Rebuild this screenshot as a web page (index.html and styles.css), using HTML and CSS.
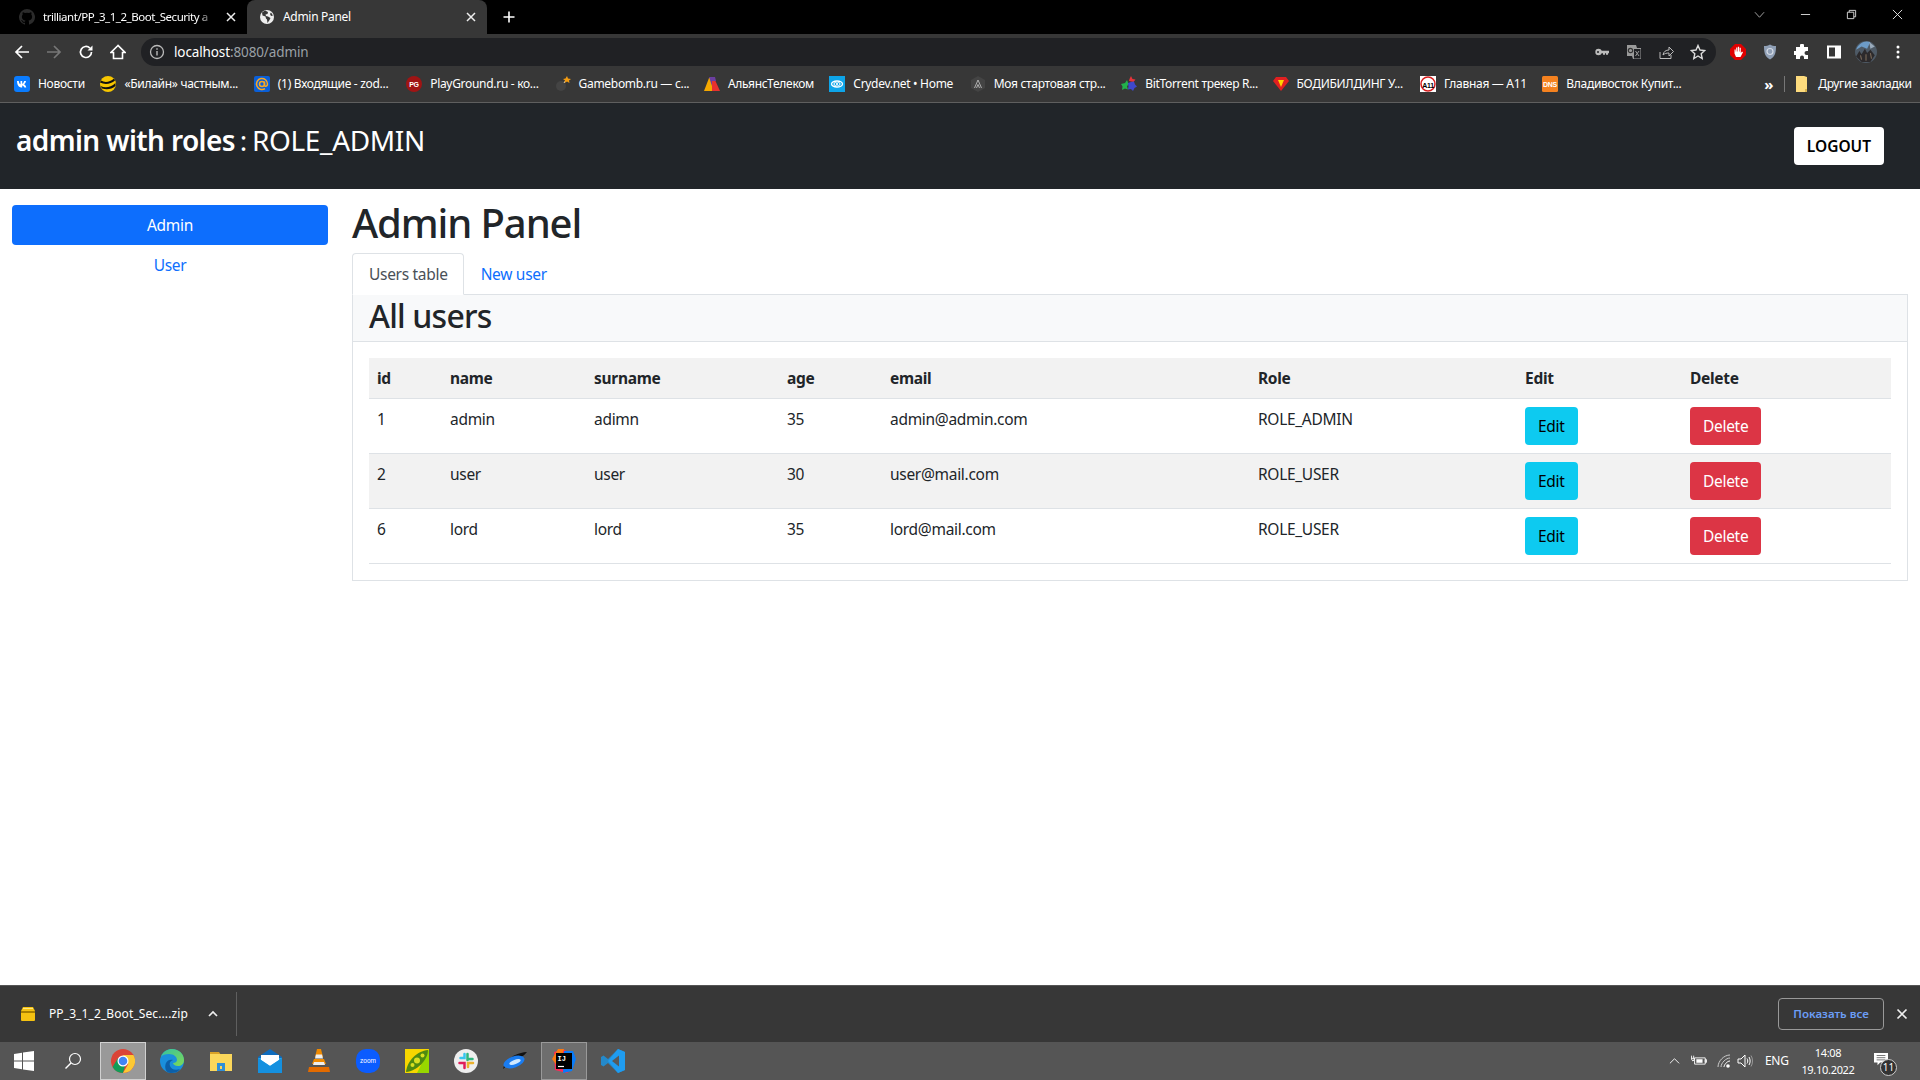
FILE: index.html
```html
<!DOCTYPE html>
<html lang="en">
<head>
  <meta charset="utf-8">
  <title>Admin Panel</title>
  <link rel="stylesheet" href="styles.css">
</head>
<body>

<div class="tabstrip">
  <div class="tab">
    <svg class="fav" viewBox="0 0 16 16"><path fill="#2b2b2b" d="M8 0a8 8 0 0 0-2.5 15.6c.4.1.5-.2.5-.4v-1.4c-2.2.5-2.7-1-2.7-1-.4-.9-.9-1.200-.9-1.200-.7-.5.100-.5.100-.5.800.100 1.200.8 1.200.8.700 1.200 1.900.900 2.300.700.100-.5.300-.900.500-1.100-1.800-.2-3.600-.900-3.600-4 0-.9.300-1.600.800-2.100-.1-.2-.4-1 .100-2.100 0 0 .7-.2 2.200.8a7.600 7.600 0 0 1 4 0c1.500-1 2.200-.8 2.200-.8.500 1.100.2 1.900.1 2.100.5.500.8 1.200.8 2.100 0 3.100-1.900 3.800-3.700 4 .3.300.6.800.6 1.500v2.200c0 .2.100.5.500.4A8 8 0 0 0 8 0z"/></svg>
    <span class="tab-title tab-fade">trilliant/PP_3_1_2_Boot_Security a</span>
    <svg class="tab-x" viewBox="0 0 10 10"><path d="m1 1 8 8M9 1 1 9" stroke="#eee" stroke-width="1.500"/></svg>
  </div>
  <div class="tab tab-active">
    <svg class="fav" viewBox="0 0 16 16"><circle cx="8" cy="8" r="7" fill="#eee"/><path fill="#373737" d="M6 1.500 3 3.500l.5 3 3 1 .5 2 1 1 .5 3.500 2-3 1-2-2.500-1.500-2-.5-.5-1.500 2-.5.500-2zM12 3.500l2 3-2 .5-1-2z"/></svg>
    <span class="tab-title">Admin Panel</span>
    <svg class="tab-x" viewBox="0 0 10 10"><path d="m1 1 8 8M9 1 1 9" stroke="#eee" stroke-width="1.500"/></svg>
  </div>
  <svg class="newtab" viewBox="0 0 12 12"><path d="M6 .5v11M.5 6h11" stroke="#fff" stroke-width="1.600"/></svg>
  <div class="winctl">
    <svg viewBox="0 0 12 12"><path d="M1 3.500 6 9l5-5.500" fill="none" stroke="#aaa"/></svg>
    <svg viewBox="0 0 12 12"><path d="M1 6h10" stroke="#ddd"/></svg>
    <svg viewBox="0 0 12 12"><path d="M1.500 3.500h7v7h-7zM3.500 3.500v-2h7v7h-2" fill="none" stroke="#ddd"/></svg>
    <svg viewBox="0 0 12 12"><path d="m1 1 10 10M11 1 1 11" stroke="#eee"/></svg>
  </div>
</div>

<div class="toolbar">
  <span class="tb-btn"><svg viewBox="0 0 16 16"><path d="M15 8H2M8 2 2 8l6 6" fill="none" stroke="#fff" stroke-width="1.700"/></svg></span>
  <span class="tb-btn"><svg viewBox="0 0 16 16"><path d="M1 8h13M8 2l6 6-6 6" fill="none" stroke="#777" stroke-width="1.700"/></svg></span>
  <span class="tb-btn"><svg viewBox="0 0 16 16"><path d="M13.500 8a5.500 5.500 0 1 1-1.600-3.900" fill="none" stroke="#fff" stroke-width="1.700"/><path d="M14.500 1.500v5h-5z" fill="#fff"/></svg></span>
  <span class="tb-btn"><svg viewBox="0 0 16 16"><path d="M8 1.500 1 8.500h2.500v6h9v-6H15z" fill="none" stroke="#fff" stroke-width="1.600"/></svg></span>
  <div class="omnibox">
    <svg class="info" viewBox="0 0 16 16"><circle cx="8" cy="8" r="6.500" fill="none" stroke="#bbb" stroke-width="1.300"/><path d="M8 7v4.500M8 4.300v1.400" stroke="#bbb" stroke-width="1.400"/></svg>
    <span class="url">localhost<span class="url-dim">:8080/admin</span></span>
    <span class="omni-icons">
      <span class="tb-btn"><svg viewBox="0 0 16 16"><circle cx="4.500" cy="8" r="3.200" fill="#bbb"/><circle cx="4" cy="8" r="1" fill="#202124"/><path d="M7 6.700h8v2.600h-1v1.500h-2V9.300h-1v1.500H9V9.300H7z" fill="#bbb"/></svg></span>
      <span class="tb-btn"><svg viewBox="0 0 16 16"><path d="M1 1h9l1 3h4v11H7l-1-3H1z" fill="#9a9a9a"/><path d="M8 5h6.500v9.500H8z" fill="#202124"/><circle cx="4.500" cy="6.500" r="2.200" fill="none" stroke="#333" stroke-width="1.200"/><path d="m9.500 7 3.500 5M13 7l-3.500 5" stroke="#9a9a9a"/></svg></span>
      <span class="tb-btn"><svg viewBox="0 0 16 16"><path d="M2 8v6.500h11V11" fill="none" stroke="#bbb"/><path d="M5 11c.500-3.500 3-5 6-5V3l4.500 4.500L11 12V9c-2.500 0-4.500.500-6 2z" fill="none" stroke="#bbb"/></svg></span>
      <span class="tb-btn"><svg viewBox="0 0 16 16"><path d="m8 1.500 2 4.500 4.800.5-3.600 3.200 1 4.800L8 12l-4.200 2.500 1-4.800L1.200 6.500 6 6z" fill="none" stroke="#ddd" stroke-width="1.400"/></svg></span>
    </span>
  </div>
  <div class="ext-icons">
    <span class="tb-btn"><svg viewBox="0 0 16 16"><path d="M5 0h6l5 5v6l-5 5H5l-5-5V5z" fill="#e00000"/><path d="M4.500 9.500V5.500h1.200v2h.5V3.500h1.200v4h.5V2.800h1.200v4.700h.5V3.800h1.200v5.200l1.200-1.400 1 .6-2.500 4.800H6z" fill="#fff"/></svg></span>
    <span class="tb-btn"><svg viewBox="0 0 16 16"><path d="M8 .5c2 1.200 3.500 1.500 6 1.500 0 6-.5 10.500-6 13.500C2.500 12.500 2 8 2 2c2.500 0 4-.3 6-1.500z" fill="#8f9fb5"/><circle cx="8" cy="7.500" r="3" fill="none" stroke="#d5dbe5" stroke-width="1.200"/></svg></span>
    <span class="tb-btn"><svg viewBox="0 0 16 16"><path d="M6 1.500a2 2 0 0 1 4 0V3h4v4h-1.500a2 2 0 0 0 0 4H14v4h-4v-1.500a2 2 0 0 0-4 0V15H2v-4H.5a2 2 0 0 1 0-4H2V3h4z" fill="#fff"/></svg></span>
    <span class="tb-btn"><svg viewBox="0 0 16 16"><path fill-rule="evenodd" d="M1 1.500h14v13H1zM3 3.500v9h6v-9z" fill="#fff"/></svg></span>
    <span class="tb-btn"><svg class="avatar" viewBox="0 0 20 20"><circle cx="10" cy="10" r="10" fill="#4e5a66"/><path d="M1 8C3 2 9-1 14 1l-3 6-5-2z" fill="#6d9cc8"/><path d="M1 14l3-5 2 3 3-5 2 4 3-3 4 5-4 6H6z" fill="#2c2a2c"/><path d="M13 1l5 4-4 2z" fill="#9ab"/><path d="M5 13l1 4M10 12v6M14 11l1 5" stroke="#7a6a5a"/></svg></span>
    <span class="tb-btn"><svg viewBox="0 0 16 16"><circle cx="8" cy="3" r="1.500" fill="#fff"/><circle cx="8" cy="8" r="1.500" fill="#fff"/><circle cx="8" cy="13" r="1.500" fill="#fff"/></svg></span>
  </div>
</div>

<div class="bookmarks">
  <div class="bm-list">
    <span class="bm"><svg viewBox="0 0 16 16"><rect width="16" height="16" rx="3" fill="#0a7cff"/><path d="M3 5h1.800c.1 2 .9 3 1.700 3.200V5h1.700v2.700c.8-.1 1.500-1 1.900-2.700H12c-.3 1.700-1.200 2.800-1.900 3.300.7.400 1.800 1.300 2.200 3.200h-1.900c-.4-1.200-1.200-2-2.200-2.100v2.100H8c-3 0-4.800-2-5-6.500z" fill="#fff"/></svg>Новости</span>
    <span class="bm"><svg viewBox="0 0 16 16"><circle cx="8" cy="8" r="8" fill="#f7c600"/><path d="M1 4.500c4 2.500 9 1.500 13-2l1 2c-4 3.500-10 4.500-15 2zM.5 10c5 2.500 10 1.500 15-3v3c-4 3.500-9 4-13.500 2.500z" fill="#111"/></svg>«Билайн» частным...</span>
    <span class="bm"><svg viewBox="0 0 16 16"><rect width="16" height="16" rx="2" fill="#0a5fd8"/><circle cx="8" cy="8" r="2.500" fill="none" stroke="#f9a825" stroke-width="1.500"/><path d="M10.500 5.500V9c0 2 3 1.500 3-1a5.500 5.500 0 1 0-2.500 4.600" fill="none" stroke="#f9a825" stroke-width="1.500"/></svg>(1) Входящие - zod...</span>
    <span class="bm"><svg viewBox="0 0 16 16"><circle cx="8" cy="8" r="8" fill="#a01414"/><text class="bm-pg" x="8" y="11">PG</text></svg>PlayGround.ru - ко...</span>
    <span class="bm"><svg viewBox="0 0 16 16"><circle cx="6" cy="10" r="5" fill="#444"/><path d="m9 7 2-3" stroke="#ddd"/><path d="m12 0 1 2.500L16 3l-2 1.500.5 2.500-2.500-1.500L9.500 7l.5-2.500L8 3l2.500-.5z" fill="#f39c12"/></svg>Gamebomb.ru — с...</span>
    <span class="bm"><svg viewBox="0 0 16 16"><path d="M0 15 5 2h3v13z" fill="#f5a800"/><path d="M8 15V4l3 0 5 11z" fill="#e8312f"/><path d="M5 1h6l1 4H8v5z" fill="#6b3fa0"/></svg>АльянсТелеком</span>
    <span class="bm"><svg viewBox="0 0 16 16"><rect width="16" height="16" fill="#0ea5e9"/><ellipse cx="8" cy="8" rx="5.500" ry="3" fill="none" stroke="#fff" stroke-width="1.300"/><circle cx="6.500" cy="8" r="1.500" fill="none" stroke="#fff"/><circle cx="9.500" cy="8" r="1.500" fill="none" stroke="#fff"/></svg>Crydev.net • Home</span>
    <span class="bm"><svg viewBox="0 0 16 16"><path d="M8 0l7 4v8l-7 4-7-4V4z" fill="#444"/><path d="M4.500 12 8 4l3.500 8M6.500 12 8 8.500 9.500 12" fill="none" stroke="#ccc" stroke-width=".8"/></svg>Моя стартовая стр...</span>
    <span class="bm"><svg viewBox="0 0 16 16"><path d="m10 0 1.500 3 3 .5-2 2.500L8 5l.5-2z" fill="#e6343a"/><path d="M0 8l4-1 2-3 1.500 4L6 10.500l1 3-3-1L1 14l.5-3.500z" fill="#22b14c"/><path d="M7 7l3-1 3-.5 1 3 2 2-2.500 1.500L12 15l-2-2-3 .5.500-3z" fill="#3f48cc"/></svg>BitTorrent трекер R...</span>
    <span class="bm"><svg viewBox="0 0 16 16"><path d="M3 1h10l3 4-8 10L0 5z" fill="#e02020"/><path d="M5 4h6L8 11z" fill="#ffd400"/></svg>БОДИБИЛДИНГ У...</span>
    <span class="bm"><svg viewBox="0 0 16 16"><rect width="16" height="16" fill="#fff"/><circle cx="8" cy="8" r="7" fill="none" stroke="#d81e1e" stroke-width="1.500"/><text class="bm-a11" x="8" y="11.500">A11</text></svg>Главная — А11</span>
    <span class="bm"><svg viewBox="0 0 16 16"><rect width="16" height="16" rx="1.500" fill="#f58220"/><text class="bm-dns" x="8" y="10.500">DNS</text></svg>Владивосток Купит...</span>
  </div>
  <span class="bm-more">»</span>
  <span class="bm-sep"></span>
  <span class="bm bm-other"><svg viewBox="0 0 16 16"><path d="M2 0h8l3 1v15H2z" fill="#fddb7d"/><path d="M11 13h2v3h-2z" fill="#d9b44f"/></svg>Другие закладки</span>
</div>

<header class="navbar">
  <h2 class="nav-title"><b>admin with roles</b> : ROLE_ADMIN</h2>
  <a class="btn btn-logout" href="#">LOGOUT</a>
</header>

<div class="page">
  <aside class="sidebar">
    <a class="side-link side-active" href="#">Admin</a>
    <a class="side-link" href="#">User</a>
  </aside>
  <main class="content">
    <h1>Admin Panel</h1>
    <div class="tabs">
      <a class="nav-tab nav-tab-active" href="#">Users table</a>
      <a class="nav-tab" href="#">New user</a>
    </div>
    <section class="card">
      <h2 class="card-header">All users</h2>
      <div class="card-body">
        <table class="users">
          <thead>
            <tr><th>id</th><th>name</th><th>surname</th><th>age</th><th>email</th><th>Role</th><th>Edit</th><th>Delete</th></tr>
          </thead>
          <tbody>
            <tr><td>1</td><td>admin</td><td>adimn</td><td>35</td><td>admin@admin.com</td><td>ROLE_ADMIN</td><td><a class="btn btn-info" href="#">Edit</a></td><td><a class="btn btn-danger" href="#">Delete</a></td></tr>
            <tr><td>2</td><td>user</td><td>user</td><td>30</td><td>user@mail.com</td><td>ROLE_USER</td><td><a class="btn btn-info" href="#">Edit</a></td><td><a class="btn btn-danger" href="#">Delete</a></td></tr>
            <tr><td>6</td><td>lord</td><td>lord</td><td>35</td><td>lord@mail.com</td><td>ROLE_USER</td><td><a class="btn btn-info" href="#">Edit</a></td><td><a class="btn btn-danger" href="#">Delete</a></td></tr>
          </tbody>
        </table>
      </div>
    </section>
  </main>
</div>

<div class="downloads">
  <svg class="dl-icon" viewBox="0 0 16 16"><path d="M3 1h10l2 4v9a1 1 0 0 1-1 1H2a1 1 0 0 1-1-1V5z" fill="#f5c211"/><path d="M1 5h14v2H1z" fill="#a87f00"/><path d="M3 2.500h10" stroke="#ffe680"/></svg>
  <span class="dl-name">PP_3_1_2_Boot_Sec....zip</span>
  <svg class="dl-caret" viewBox="0 0 12 12"><path d="m2 8 4-4 4 4" fill="none" stroke="#eee" stroke-width="1.700"/></svg>
  <span class="dl-sep"></span>
  <a class="dl-all" href="#">Показать все</a>
  <svg class="dl-close" viewBox="0 0 12 12"><path d="m1.500 1.500 9 9M10.500 1.500l-9 9" stroke="#eee" stroke-width="1.700"/></svg>
</div>

<footer class="taskbar">
  <span class="task task-start"><svg viewBox="0 0 20 20"><path d="M0 3l8-1.200V9.500H0zM9 1.600 20 0v9.500H9zM0 10.500h8v7.800L0 17zM9 10.500h11V20L9 18.400z" fill="#fff"/></svg></span>
  <span class="task task-search"><svg viewBox="0 0 18 18"><circle cx="11" cy="7" r="5.500" fill="none" stroke="#fff" stroke-width="1.200"/><path d="M7 11 1.500 16.500" stroke="#fff" stroke-width="1.400"/></svg></span>
  <span class="task task-open"><svg viewBox="0 0 24 24"><circle cx="12" cy="12" r="12" fill="#db4437"/><path d="M12 24a12 12 0 0 1-10.400-6L7 9l5 8 2 0z" fill="#0f9d58"/><path d="M12 6h10.400A12 12 0 0 1 12 24l5.200-9z" fill="#fcc934"/><circle cx="12" cy="12" r="5.500" fill="#fff"/><circle cx="12" cy="12" r="4.300" fill="#4285f4"/></svg></span>
  <span class="task"><svg viewBox="0 0 24 24"><defs><linearGradient id="edge" x1="0" y1="0" x2="1" y2="1"><stop offset="0" stop-color="#35c1a0"/><stop offset="1" stop-color="#7ed957"/></linearGradient></defs><circle cx="12" cy="12" r="12" fill="#1a8fdc"/><path d="M1 8C3 2 8 0 12 0c7 0 12 5 12 11 0 4-3 6-6 6-3 0-5-2-5-3 2 0 4-1 4-3 0-3-3-6-8-6C5 5 2 6 1 8z" fill="url(#edge)"/><path d="M11 24C6 24 4 19 6 14c1-3 5-4 7-3-3 1-4 3-3 6 1 3 5 5 10 3-2 3-5 4-9 4z" fill="#0c5fa8"/></svg></span>
  <span class="task"><svg viewBox="0 0 24 24"><path d="M1 3h9l2 3H1z" fill="#d9a227"/><path d="M1 5h22v17H1z" fill="#fbd75b"/><path d="M8 14h8v8H8z" fill="#2f8fd8"/><path d="M11 17h2v3h-2z" fill="#fbd75b"/></svg></span>
  <span class="task"><svg viewBox="0 0 24 24"><path d="M0 8 12 0l12 8v16H0z" fill="#0f6cbd"/><path d="M0 9h24v15H0z" fill="#28a8ea"/><path d="M3 6h18v5l-9 6-9-6z" fill="#fff"/><path d="m0 9 12 8 12-8v15H0z" fill="#1490df"/></svg></span>
  <span class="task"><svg viewBox="0 0 24 24"><path d="M10 0h4l2 8H8z" fill="#f08a00"/><path d="M9 5.500h6l1 4H8z" fill="#eee"/><path d="M7 10h10l2 5H5z" fill="#f08a00"/><path d="M7 13h10l1 3H6z" fill="#eee"/><path d="M2 18h20l1 5H1z" fill="#e36b00"/></svg></span>
  <span class="task"><svg viewBox="0 0 24 24"><rect width="24" height="24" rx="10" fill="#0b5cff"/><text class="zoom-word" x="12" y="14">zoom</text></svg></span>
  <span class="task"><svg viewBox="0 0 24 24"><rect width="24" height="24" fill="#f7d600"/><path d="M24 0v24H12z" fill="#97d700"/><path d="M1 23C2 12 12 2 23 1c0 10-11 21-22 22z" fill="#4f8a10"/><circle cx="7.500" cy="16" r="2" fill="#d9e021"/><circle cx="12" cy="11.500" r="3" fill="#d9e021"/><circle cx="17.500" cy="6.500" r="2" fill="#d9e021"/></svg></span>
  <span class="task"><svg viewBox="0 0 24 24"><circle cx="12" cy="12" r="12" fill="#eee"/><path d="M10.500 5v4h-4" stroke="#36c5f0" stroke-width="2.500" fill="none" stroke-linecap="round"/><path d="M13.500 5v6M15.500 10h3" stroke="#2eb67d" stroke-width="2.500" stroke-linecap="round"/><path d="M19 14h-5v4" stroke="#ecb22e" stroke-width="2.500" fill="none" stroke-linecap="round"/><path d="M5.500 14h5v5" stroke="#e01e5a" stroke-width="2.500" fill="none" stroke-linecap="round"/></svg></span>
  <span class="task"><svg viewBox="0 0 24 24"><path d="M0 20C2 12 10 4 24 3c-3 4-6 5-10 7-5 2-8 5-14 10z" fill="#111"/><ellipse cx="11" cy="13" rx="11" ry="5.500" transform="rotate(-20 11 13)" fill="#1a7cf0"/><ellipse cx="12" cy="13" rx="6" ry="2.200" transform="rotate(-20 12 13)" fill="#cfe8ff"/></svg></span>
  <span class="task task-running"><svg viewBox="0 0 24 24"><path d="M2 3 11 0l5 3 7 4-3 13-5 4-12-3z" fill="#fe2857"/><path d="M12 2h9l3 8-4 12-9 2z" fill="#087cfa"/><path d="M0 10 6 0h6L6 18z" fill="#f97a12"/><rect x="4" y="4" width="16" height="16" fill="#000"/><text class="ij-word" x="5.500" y="11.500">IJ</text><path d="M6 17.500h6" stroke="#fff" stroke-width="1.200"/></svg></span>
  <span class="task"><svg viewBox="0 0 24 24"><path d="M17 0 7 10 2.500 6.500 0 8v8l2.500 1.500L7 14l10 10 7-3V3z" fill="#2489ca"/><path d="M17 0 7 12l10 12 7-3V3z" fill="#1f9cf0"/><path d="M18 6.500 11 12l7 5.500z" fill="#595959"/></svg></span>

  <div class="tray">
    <svg class="tray-caret" viewBox="0 0 12 12"><path d="m1 8 5-5 5 5" fill="none" stroke="#fff"/></svg>
    <svg class="tray-icon tray-battery" viewBox="0 0 18 14"><path d="M4 3.500h12v7H4z" fill="none" stroke="#fff"/><path d="M6 5h7v4H6z" fill="#fff"/><path d="M16 5.500h1.500v3H16zM.5 1v3M3 1v3M0 4h3.500v2L2 7z" fill="none" stroke="#fff"/></svg>
    <svg class="tray-icon" viewBox="0 0 16 16"><path d="M2 14C2 8 8 2 14 2M5 14c0-4 5-9 9-9" fill="none" stroke="#ccc"/><path d="M8 14c0-2 3-6 6-6" fill="none" stroke="#fff"/><circle cx="12" cy="13" r="1.800" fill="#fff"/></svg>
    <svg class="tray-icon tray-sound" viewBox="0 0 16 16"><path d="M1 6h3l4-4v12l-4-4H1z" fill="none" stroke="#fff"/><path d="M10 5.500c1 1.500 1 3.500 0 5M12 4c1.500 2.500 1.500 5.500 0 8" fill="none" stroke="#fff"/><path d="M14 2.500c2 3 2 8 0 11" fill="none" stroke="#999"/></svg>
    <span class="tray-lang">ENG</span>
    <span class="tray-clock"><span>14:08</span><span>19.10.2022</span></span>
    <span class="tray-notify">
      <svg viewBox="0 0 16 16"><path d="M0 1h16v11H7l-3 3v-3H0z" fill="#fff"/><path d="M3 4h10M3 6.500h10M3 9h10" stroke="#666"/></svg>
      <span class="notify-count">11</span>
    </span>
  </div>
</footer>

</body>
</html>
```

FILE: styles.css
```css
* {
    box-sizing: border-box;
}

html, body {
    margin: 0;
    padding: 0;
}

body {
    width: 1920px;
    height: 1080px;
    overflow: hidden;
    display: flex;
    flex-direction: column;
    font: 15.500px/24px "Noto Sans", "Open Sans", sans-serif;
    letter-spacing: -.3px;
    color: #212529;
    background: #fff;
}

a {
    text-decoration: none;
}

svg {
    display: block;
    flex: none;
}

/* browser chrome */

.tabstrip {
    height: 34px;
    flex: none;
    display: flex;
    align-items: stretch;
    background: #000;
    color: #fff;
    font-size: 12px;
    padding-left: 7px;
}

.tab {
    width: 240px;
    display: flex;
    align-items: center;
    padding: 0 8px 0 12px;
    gap: 8px;
}

.tab-active {
    background: #373737;
    border-radius: 8px 8px 0 0;
}

.tab-title {
    flex: 1;
    white-space: nowrap;
}

.tab-fade {
    font-size: 11.500px;
    letter-spacing: -.45px;
    -webkit-mask-image: linear-gradient(to right, #000 90%, transparent);
    mask-image: linear-gradient(to right, #000 90%, transparent);
}

.fav {
    width: 16px;
    height: 16px;
}

.tab-x {
    width: 10px;
    height: 10px;
    margin: 0 3px;
}

.newtab {
    width: 12px;
    height: 12px;
    margin: 11px 0 0 16px;
}

.winctl {
    margin-left: auto;
    display: flex;
    align-items: center;
    gap: 35px;
    padding: 0 17px 6px 0;
}

.winctl svg {
    width: 11px;
    height: 11px;
}

.toolbar {
    height: 32px;
    flex: none;
    display: flex;
    padding: 0 6px;
    background: #373737;
    align-items: flex-end;
}

.tb-btn {
    width: 32px;
    height: 28px;
    flex: none;
    display: flex;
    align-items: center;
    justify-content: center;
}

.tb-btn svg {
    width: 16px;
    height: 16px;
}

.tb-btn .avatar {
    width: 22px;
    height: 22px;
}

.omnibox {
    flex: 1;
    height: 28px;
    margin: 0 6px 0 7px;
    display: flex;
    align-items: center;
    padding-left: 8px;
    background: #202124;
    border-radius: 14px;
    color: #fff;
    font-size: 13.500px;
    letter-spacing: -.12px;
}

.info {
    width: 16px;
    height: 16px;
    margin-right: 9px;
}

.url-dim {
    color: #9aa0a6;
}

.omni-icons, .ext-icons {
    display: flex;
}

.omni-icons {
    margin-left: auto;
    padding-right: 2px;
}

.bookmarks {
    height: 37px;
    flex: none;
    display: flex;
    align-items: center;
    padding: 0 0 1px 14px;
    background: #373737;
    border-bottom: 1px solid #5f5f5f;
    color: #fff;
    font-size: 12px;
}

.bm-list {
    display: grid;
    grid-template-columns: 70px 137px 136px 132px 133px 109px 124px 135px 135px 131px 106px 137px;
    column-gap: 16.400px;
}

.bm {
    display: flex;
    align-items: center;
    gap: 8px;
    white-space: nowrap;
}

.bm svg {
    width: 16px;
    height: 16px;
}

.bm-pg, .bm-a11, .bm-dns {
    font: bold 7px "Liberation Sans", sans-serif;
    text-anchor: middle;
}

.bm-pg, .bm-dns {
    fill: #fff;
}

.bm-a11 {
    fill: #000;
}

.bm-more {
    margin-left: 85px;
    font-size: 15px;
    font-weight: bold;
}

.bm-sep {
    width: 1px;
    height: 16px;
    margin: 0 9px 0 11px;
    background: #777;
}

/* page */

.navbar {
    height: 86px;
    flex: none;
    display: flex;
    justify-content: space-between;
    align-items: flex-start;
    padding: 21px 36px 0 16px;
    background: #212529;
}

.nav-title {
    margin: 0;
    color: #fff;
    font-size: 28px;
    font-weight: 400;
    line-height: 1.200;
    letter-spacing: -.35px;
    word-spacing: -2px;
}

.nav-title b {
    font-weight: 600;
    letter-spacing: -.6px;
    word-spacing: 0;
}

.btn {
    display: inline-block;
    padding: 7px 13px;
    border-radius: 4px;
    white-space: nowrap;
}

.btn-logout {
    margin-top: 3px;
    color: #000;
    background: #fff;
    font-size: 15.500px;
    font-weight: 600;
    letter-spacing: 0;
}

.btn-info {
    color: #000;
    background: #0dcaf0;
}

.btn-danger {
    color: #fff;
    background: #dc3545;
}

.page {
    flex: 1;
    display: flex;
    min-height: 0;
    padding: 0 12px;
}

.sidebar {
    width: 316px;
    flex: none;
    padding-top: 16px;
}

.side-link {
    display: block;
    padding: 8px 16px;
    text-align: center;
    color: #0d6efd;
    border-radius: 4px;
}

.side-active {
    color: #fff;
    background: #0d6efd;
}

.content {
    flex: 1;
    margin-left: 24px;
    padding-top: 10px;
}

h1 {
    margin: 0 0 6px;
    font-size: 40px;
    font-weight: 500;
    line-height: 1.200;
    letter-spacing: -1.100px;
}

.tabs {
    display: flex;
    margin-bottom: -1px;
}

.nav-tab {
    padding: 8px 16px;
    border: 1px solid transparent;
    border-radius: 4px 4px 0 0;
    color: #0d6efd;
}

.nav-tab-active {
    position: relative;
    padding-right: 15px;
    color: #495057;
    background: #fff;
    border-color: #dee2e6 #dee2e6 #fff;
}

.card {
    border: 1px solid #dee2e6;
}

.card-header {
    margin: 0;
    padding: 2px 16px;
    height: 47px;
    font-size: 32px;
    font-weight: 500;
    line-height: 1.200;
    letter-spacing: -.8px;
    background: #f8f9fa;
    border-bottom: 1px solid #dee2e6;
}

.card-body {
    padding: 16px;
}

.users {
    width: 100%;
    table-layout: fixed;
    border-collapse: collapse;
}

.users th, .users td {
    padding: 8px;
    text-align: left;
    vertical-align: top;
    border-bottom: 1px solid #dee2e6;
}

.users th {
    font-weight: 700;
    background: #f2f2f2;
}

.users tbody tr:nth-child(even) {
    background: #f2f2f2;
}

.users th:nth-child(1) { width: 73px; }
.users th:nth-child(2) { width: 144px; }
.users th:nth-child(3) { width: 193px; }
.users th:nth-child(4) { width: 103px; }
.users th:nth-child(5) { width: 368px; }
.users th:nth-child(6) { width: 267px; }
.users th:nth-child(7) { width: 165px; }

/* download bar and windows taskbar */

.downloads {
    height: 57px;
    flex: none;
    display: flex;
    align-items: center;
    padding: 0 12px 0 20px;
    background: #373737;
    border-top: 1px solid #555;
    color: #fff;
    font-size: 12px;
    letter-spacing: 0;
}

.dl-icon {
    width: 16px;
    height: 16px;
}

.dl-name {
    margin-left: 13px;
    width: 138px;
    white-space: nowrap;
    letter-spacing: .1px;
}

.dl-caret {
    width: 12px;
    height: 12px;
    margin-left: 20px;
}

.dl-sep {
    width: 1px;
    height: 44px;
    margin-left: 17px;
    background: #5f5f5f;
}

.dl-all {
    margin-left: auto;
    width: 106px;
    height: 32px;
    border: 1px solid #999;
    border-radius: 4px;
    color: #6b9df5;
    font-size: 11.500px;
    font-weight: 600;
    line-height: 30px;
    text-align: center;
}

.dl-close {
    width: 12px;
    height: 12px;
    margin-left: 12px;
}

.taskbar {
    height: 38px;
    flex: none;
    display: flex;
    background: #555;
    color: #fff;
    font-size: 12px;
    letter-spacing: 0;
}

.task {
    width: 49px;
    display: flex;
    align-items: center;
    justify-content: center;
}

.task svg {
    width: 24px;
    height: 24px;
}

.task-start {
    width: 48px;
}

.task-start svg {
    width: 20px;
    height: 20px;
}

.task-search {
    width: 50px;
}

.task-search svg {
    width: 18px;
    height: 18px;
}

.task-open {
    background: #999;
    border: 1px solid #d0d0d0;
    margin: 0 1.500px;
    width: 46px;
}

.task-running {
    background: #6e6e6e;
    border: 1px solid #999;
    margin: 0 1.500px;
    width: 46px;
}

.zoom-word {
    font: 6.500px "Liberation Sans", sans-serif;
    fill: #fff;
    text-anchor: middle;
}

.ij-word {
    font: bold 7px "Liberation Mono", monospace;
    fill: #fff;
}

.tray {
    margin-left: auto;
    padding-right: 22px;
    display: flex;
    align-items: center;
}

.tray-caret {
    width: 11px;
    height: 11px;
}

.tray-icon {
    width: 16px;
    height: 16px;
    margin-left: 9px;
}

.tray-battery {
    margin-left: 11px;
}

.tray-sound {
    margin-left: 5px;
}

.tray-lang {
    margin-left: 12px;
    width: 24px;
    letter-spacing: -.3px;
}

.tray-clock {
    margin-left: 3px;
    width: 72px;
    display: flex;
    flex-direction: column;
    align-items: center;
    font-size: 11px;
    letter-spacing: -.3px;
    line-height: 17px;
}

.tray-notify {
    position: relative;
    width: 34px;
    height: 38px;
    display: flex;
    align-items: center;
    justify-content: center;
}

.tray-notify svg {
    width: 16px;
    height: 14px;
    margin-top: -4px;
}

.notify-count {
    position: absolute;
    right: 1px;
    bottom: 4px;
    width: 17px;
    height: 17px;
    border: 1px solid #ccc;
    border-radius: 50%;
    background: #333;
    font-size: 10px;
    line-height: 15px;
    text-align: center;
}
```
